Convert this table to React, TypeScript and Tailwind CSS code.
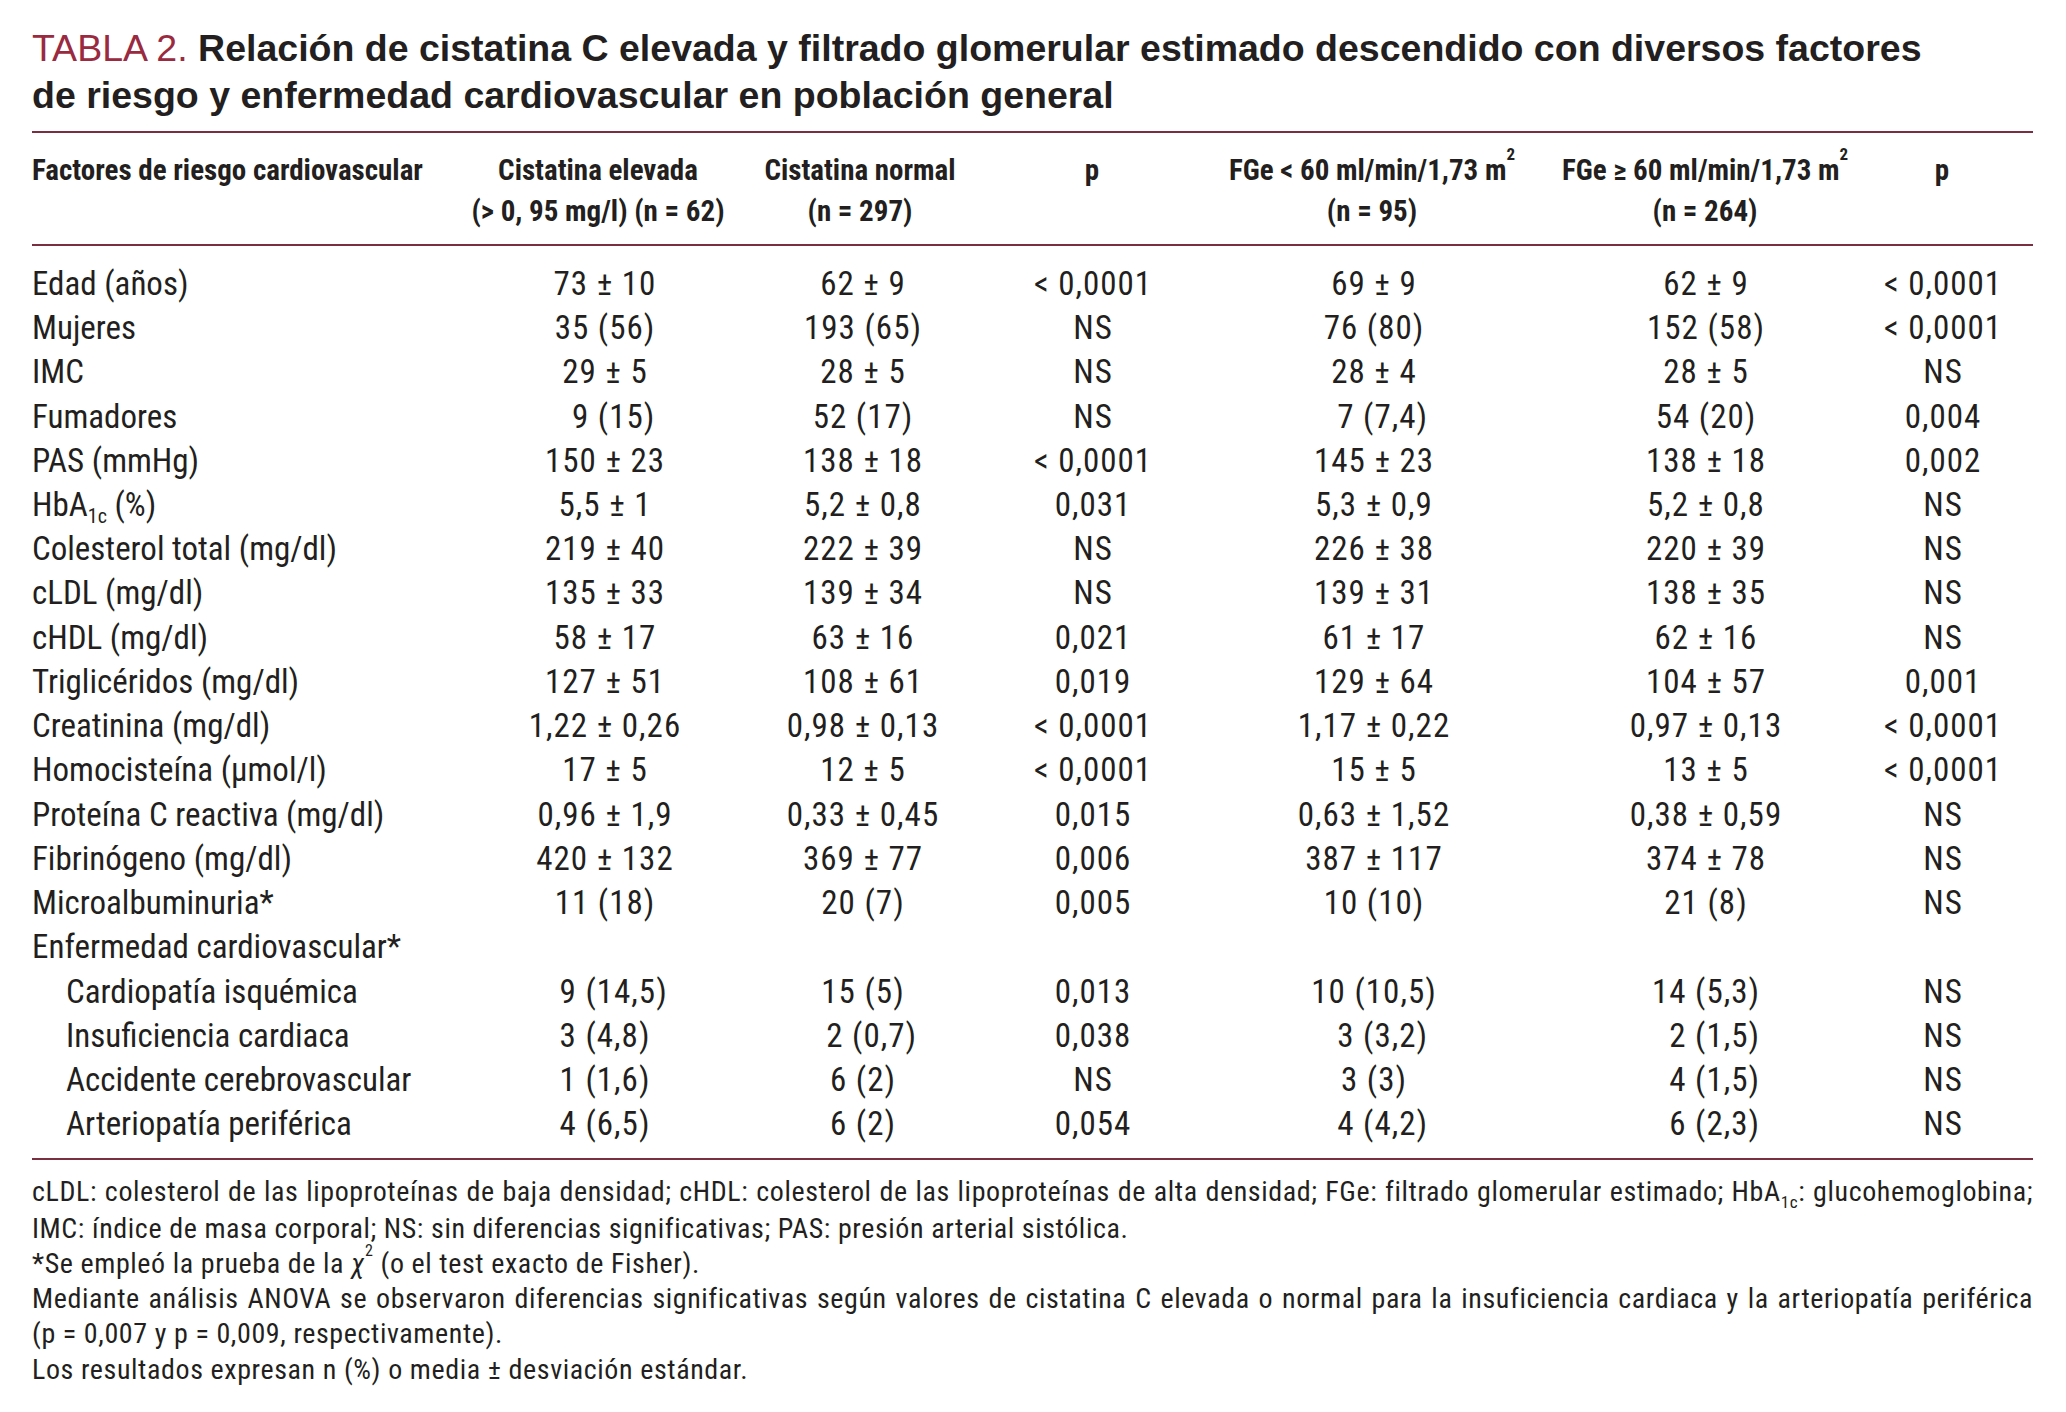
import React from "react";

type Row = {
  label: React.ReactNode;
  values: string[];
  indent?: boolean;
};

const fig = "\u2007";

const rows: Row[] = [
  { label: "Edad (años)", values: ["73 ± 10", "62 ± 9", "< 0,0001", "69 ± 9", "62 ± 9", "< 0,0001"] },
  { label: "Mujeres", values: ["35 (56)", "193 (65)", "NS", "76 (80)", "152 (58)", "< 0,0001"] },
  { label: "IMC", values: ["29 ± 5", "28 ± 5", "NS", "28 ± 4", "28 ± 5", "NS"] },
  { label: "Fumadores", values: [fig + "9 (15)", "52 (17)", "NS", fig + "7 (7,4)", "54 (20)", "0,004"] },
  { label: "PAS (mmHg)", values: ["150 ± 23", "138 ± 18", "< 0,0001", "145 ± 23", "138 ± 18", "0,002"] },
  {
    label: (
      <>
        HbA<span className="align-[-7px] text-[20px] leading-none">1c</span> (%)
      </>
    ),
    values: ["5,5 ± 1", "5,2 ± 0,8", "0,031", "5,3 ± 0,9", "5,2 ± 0,8", "NS"],
  },
  { label: "Colesterol total (mg/dl)", values: ["219 ± 40", "222 ± 39", "NS", "226 ± 38", "220 ± 39", "NS"] },
  { label: "cLDL (mg/dl)", values: ["135 ± 33", "139 ± 34", "NS", "139 ± 31", "138 ± 35", "NS"] },
  { label: "cHDL (mg/dl)", values: ["58 ± 17", "63 ± 16", "0,021", "61 ± 17", "62 ± 16", "NS"] },
  { label: "Triglicéridos (mg/dl)", values: ["127 ± 51", "108 ± 61", "0,019", "129 ± 64", "104 ± 57", "0,001"] },
  { label: "Creatinina (mg/dl)", values: ["1,22 ± 0,26", "0,98 ± 0,13", "< 0,0001", "1,17 ± 0,22", "0,97 ± 0,13", "< 0,0001"] },
  { label: "Homocisteína (μmol/l)", values: ["17 ± 5", "12 ± 5", "< 0,0001", "15 ± 5", "13 ± 5", "< 0,0001"] },
  { label: "Proteína C reactiva (mg/dl)", values: ["0,96 ± 1,9", "0,33 ± 0,45", "0,015", "0,63 ± 1,52", "0,38 ± 0,59", "NS"] },
  { label: "Fibrinógeno (mg/dl)", values: ["420 ± 132", "369 ± 77", "0,006", "387 ± 117", "374 ± 78", "NS"] },
  { label: "Microalbuminuria*", values: ["11 (18)", "20 (7)", "0,005", "10 (10)", "21 (8)", "NS"] },
  { label: "Enfermedad cardiovascular*", values: ["", "", "", "", "", ""] },
  { label: "Cardiopatía isquémica", indent: true, values: [fig + "9 (14,5)", "15 (5)", "0,013", "10 (10,5)", "14 (5,3)", "NS"] },
  { label: "Insuficiencia cardiaca", indent: true, values: ["3 (4,8)", fig + "2 (0,7)", "0,038", fig + "3 (3,2)", fig + "2 (1,5)", "NS"] },
  { label: "Accidente cerebrovascular", indent: true, values: ["1 (1,6)", "6 (2)", "NS", "3 (3)", fig + "4 (1,5)", "NS"] },
  { label: "Arteriopatía periférica", indent: true, values: ["4 (6,5)", "6 (2)", "0,054", fig + "4 (4,2)", fig + "6 (2,3)", "NS"] },
];

const grid = "grid grid-cols-[430px_272px_252px_212px_348px_318px_156px]";
const condensed = "font-['Roboto',sans-serif] font-stretch-[75%]";
// small nudges so the figures sit where the printed table has them
const valueShift = ["pl-[14px]", "pl-[6px]", "pl-[2px]", "pl-[4px]", "pl-[2px]", "pl-[2px]"];

function Rule() {
  return <div className="h-[2px] w-full bg-[#7a2f40]" />;
}

export default function App() {
  return (
    <div className="min-h-[1412px] bg-white pl-[32px] pt-[25px] text-[#231f20]">
      <div className="w-[2001px]">
        <h1 className="font-['Liberation_Sans',Arial,sans-serif] text-[37.5px] leading-[47.4px] font-bold">
          <span className="font-normal text-[#9a2a40]">TABLA 2.</span> Relación de cistatina C elevada y filtrado
          glomerular estimado descendido con diversos factores
          <br />
          de riesgo y enfermedad cardiovascular en población general
        </h1>

        <div className="mt-[11px]">
          <Rule />
        </div>

        <div className={`${grid} ${condensed} pt-[17px] pb-[12px] text-[29px] leading-[41px] font-bold whitespace-nowrap`}>
          <div>Factores de riesgo cardiovascular</div>
          <div className="text-center">
            Cistatina elevada
            <br />
            (&gt; 0, 95 mg/l) (n = 62)
          </div>
          <div className="text-center">
            Cistatina normal
            <br />
            (n = 297)
          </div>
          <div className="text-center">p</div>
          <div className="text-center">
            FGe &lt; 60 ml/min/1,73 m<sup className="text-[17px] align-[11px] leading-none">2</sup>
            <br />
            (n = 95)
          </div>
          <div className="text-center">
            FGe ≥ 60 ml/min/1,73 m<sup className="text-[17px] align-[11px] leading-none">2</sup>
            <br />
            (n = 264)
          </div>
          <div className="text-center">p</div>
        </div>

        <Rule />

        <div className={`${condensed} pt-[16px] pb-[11px] text-[33px] leading-[44.24px]`}>
          {rows.map((row, i) => (
            <div key={i} className={`${grid} h-[44.24px] whitespace-pre`}>
              <div className={row.indent ? "pl-[34px]" : ""}>{row.label}</div>
              {row.values.map((v, j) => (
                <div key={j} className={`${valueShift[j]} text-center tracking-[1px]`}>
                  {v}
                </div>
              ))}
            </div>
          ))}
        </div>

        <Rule />

        <div className={`${condensed} pt-[14px] text-[28px] leading-[35.3px] tracking-[0.6px]`}>
          <p className="whitespace-nowrap text-justify [text-align-last:justify]">
            cLDL: colesterol de las lipoproteínas de baja densidad; cHDL: colesterol de las lipoproteínas de alta
            densidad; FGe: filtrado glomerular estimado; HbA
            <span className="align-[-7px] text-[17px] leading-none">1c</span>: glucohemoglobina;
          </p>
          <p>IMC: índice de masa corporal; NS: sin diferencias significativas; PAS: presión arterial sistólica.</p>
          <p>
            *Se empleó la prueba de la <span className="italic">χ</span>
            <sup className="text-[16px] align-[9px] leading-none">2</sup> (o el test exacto de Fisher).
          </p>
          <p className="whitespace-nowrap text-justify [text-align-last:justify]">
            Mediante análisis ANOVA se observaron diferencias significativas según valores de cistatina C elevada o
            normal para la insuficiencia cardiaca y la arteriopatía periférica
          </p>
          <p>(p = 0,007 y p = 0,009, respectivamente).</p>
          <p>Los resultados expresan n (%) o media ± desviación estándar.</p>
        </div>
      </div>
    </div>
  );
}
